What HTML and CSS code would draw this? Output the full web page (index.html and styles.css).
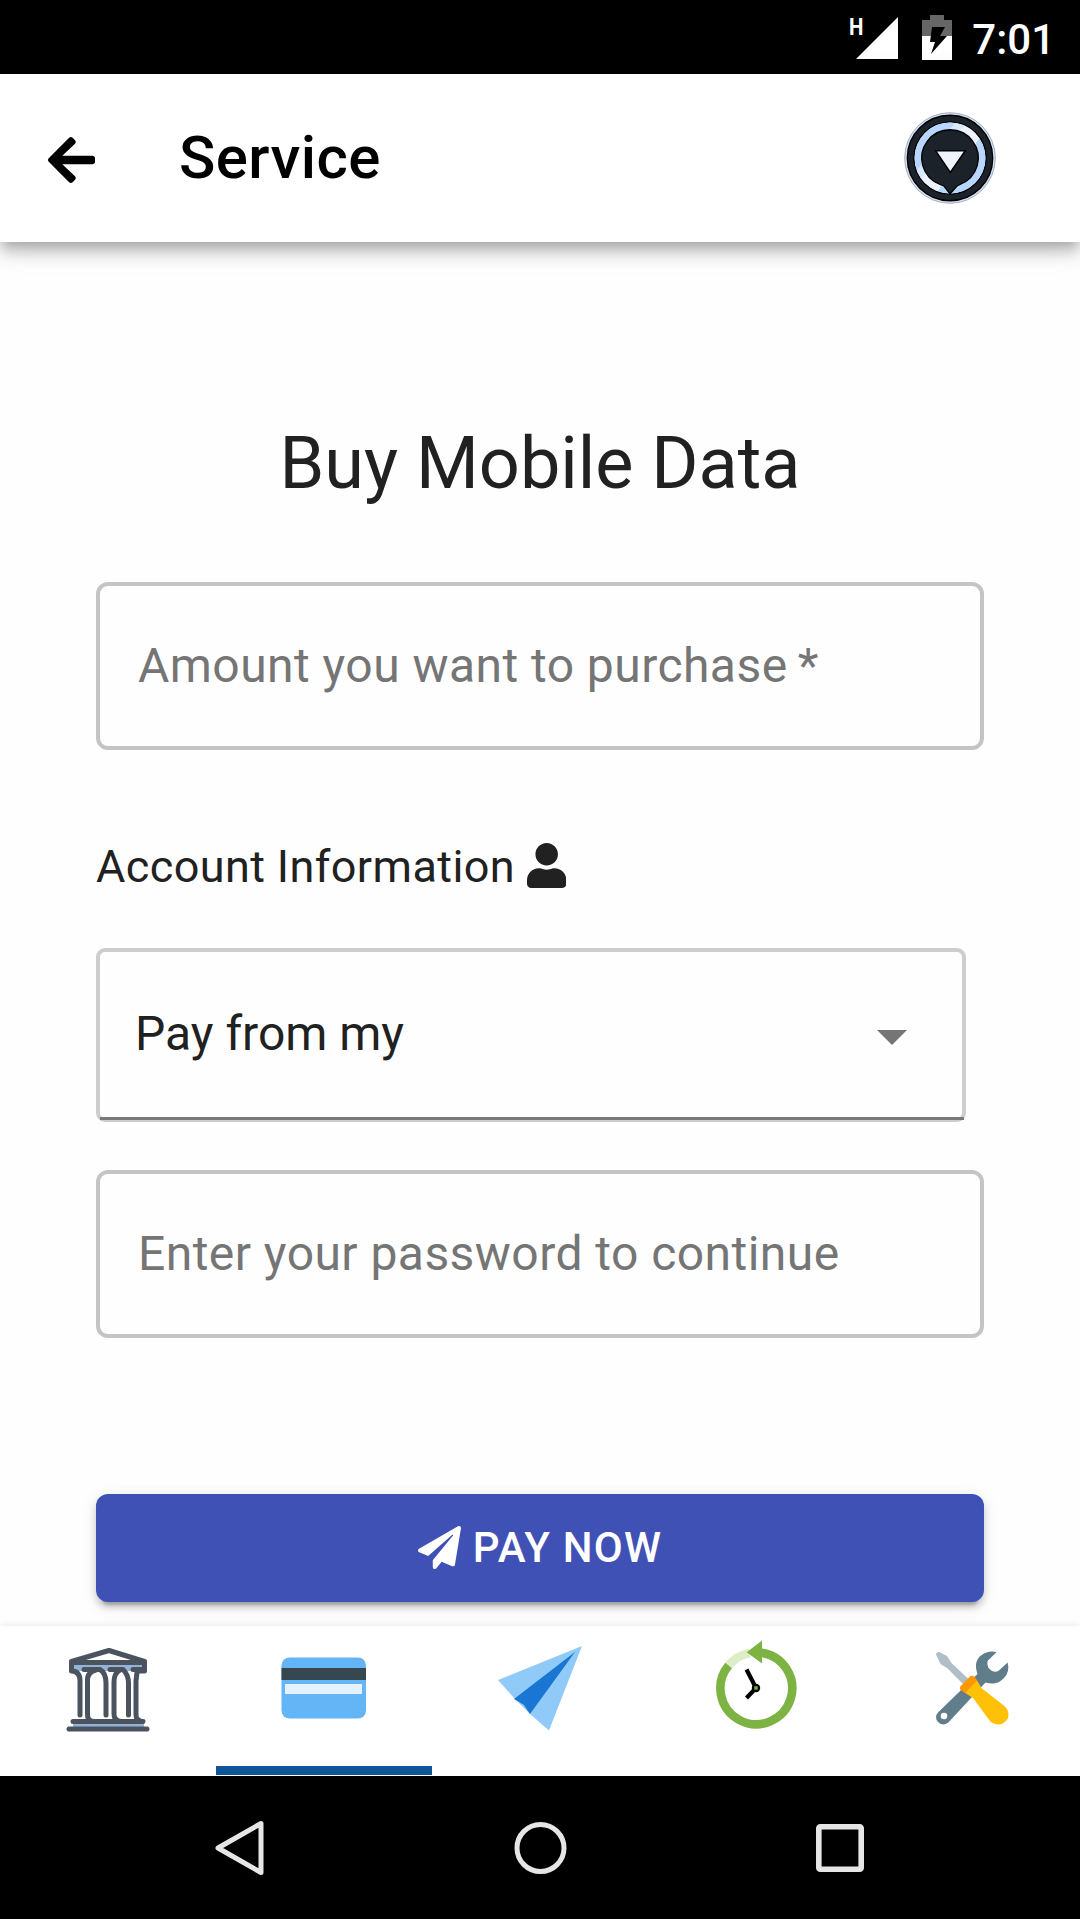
FILE: index.html
```html
<!DOCTYPE html>
<html lang="en">
<head>
<meta charset="utf-8">
<title>Service</title>
<link rel="stylesheet" href="styles.css">
</head>
<body>
<div class="screen">
  <div class="status-bar">
    <span class="network">H</span>
    <svg class="signal" width="42" height="42" viewBox="0 0 42 42"><path d="M42 0V42H0z" fill="#fff"/></svg>
    <svg class="battery" width="30" height="45" viewBox="0 0 30 45">
      <path d="M8 0H22V5H30V21H0V5H8z" fill="#666"/>
      <path d="M0 21H30V45H0z" fill="#fff"/>
      <path d="M10 12H23L18 21H25L9 39L13 27H8z" fill="#000"/>
    </svg>
    <span class="clock">7:01</span>
  </div>

  <header class="app-bar">
    <svg class="back" width="47" height="54" viewBox="0 0 448 512"><path d="M257.500 445.100l-22.200 22.200c-9.400 9.400-24.600 9.400-33.900 0L7 273c-9.400-9.400-9.400-24.600 0-33.900L201.400 44.700c9.400-9.400 24.600-9.400 33.900 0l22.200 22.200c9.500 9.500 9.300 25-.4 34.300L136.600 216H424c13.300 0 24 10.700 24 24v32c0 13.300-10.700 24-24 24H136.600l120.500 114.800c9.800 9.300 10 24.800.4 34.300z"/></svg>
    <h1 class="app-title">Service</h1>
    <svg class="avatar" width="92" height="92" viewBox="-46 -46 92 92">
      <defs>
        <linearGradient id="sheen" x1="0" y1="0.1" x2="1" y2="0.9">
          <stop offset="0" stop-color="#b9d6ff"/><stop offset=".3" stop-color="#b9d6ff"/>
          <stop offset=".3" stop-color="#d9e9fd"/><stop offset=".4" stop-color="#d9e9fd"/>
          <stop offset=".4" stop-color="#eff1fd"/><stop offset=".62" stop-color="#eff1fd"/>
          <stop offset=".62" stop-color="#b9d6ff"/><stop offset="1" stop-color="#b9d6ff"/>
        </linearGradient>
      </defs>
      <circle r="45.300" fill="#d3e4fb" stroke="#a9adb5" stroke-width="1"/>
      <circle r="39.400" fill="none" stroke="#000" stroke-width="8"/>
      <circle r="39.400" fill="none" stroke="#1c2229" stroke-width="5.400"/>
      <circle r="35.500" fill="url(#sheen)"/>
      <path d="M-10 26.500L-6 28L0 36L7 28L10 26.500A28.300 28.300 0 1 0-10 26.500z" fill="#1c2229" stroke="#000" stroke-width="1.300"/>
      <path d="M-14.300-7.200H15.300L.3 14.500z" fill="#f0f2fd" stroke="#000" stroke-width="1.500"/>
    </svg>
  </header>

  <main class="content">
    <h2 class="heading">Buy Mobile Data</h2>
    <div class="field field-amount">Amount you want to purchase&thinsp;*</div>
    <div class="account">
      <span class="account-label">Account Information</span>
      <svg width="39.400" height="45" viewBox="0 0 448 512"><path fill="#212121" d="M224 256c70.700 0 128-57.300 128-128S294.700 0 224 0 96 57.300 96 128s57.300 128 128 128zm89.600 32h-16.700c-22.200 10.200-46.900 16-72.900 16s-50.600-5.800-72.900-16h-16.700C60.200 288 0 348.200 0 422.400V464c0 26.500 21.500 48 48 48h352c26.500 0 48-21.500 48-48v-41.600c0-74.200-60.200-134.400-134.400-134.400z"/></svg>
    </div>
    <div class="select">
      <span class="select-value">Pay from my</span>
      <svg class="select-arrow" width="30" height="15" viewBox="0 0 30 15"><path d="M0 0H30L15 15z" fill="#757575"/></svg>
    </div>
    <div class="field field-password">Enter your password to continue</div>
    <div class="pay">
      <svg width="43" height="43" viewBox="0 0 512 512"><path fill="#fff" d="M476 3.200L12.500 270.600c-18.100 10.400-15.800 35.600 2.200 43.200L121 358.400l287.300-253.200c5.500-4.900 13.300 2.600 8.600 8.300L176 407v80.500c0 23.600 28.500 32.900 42.500 15.800L282 426l124.600 52.200c14.200 6 30.400-2.900 33-18.200l72-432C515 7.800 493.300-6.800 476 3.200z"/></svg>
      <span>PAY NOW</span>
    </div>
  </main>

  <nav class="tabs">
    <div class="tab">
      <svg width="90" height="90" viewBox="0 -1 90 90">
        <path d="M9 18H79V24H9zM10 76H81V82H10z" fill="#93b4da"/>
        <g fill="none" stroke="#4b535e" stroke-width="5" stroke-linecap="round" stroke-linejoin="round">
          <path d="M8.500 16V24Q17 24 17 34V68M8.500 14.500L46 3.500L81.500 14.500M8.500 15.500H81.500V24H74Q74 26 73 34V68Q73 74 80 74.500H10"/>
          <path d="M21 22.500H37Q43 26 43 36V68M33 23Q24 25 24.500 34V67Q24 74 31 74.500M47 22.500H60Q65.500 28 65.500 36V68M57 23Q51 26 51 35V67Q51 74 58 74.500M70 22.500H81.500M6 82H84"/>
        </g>
      </svg>
    </div>
    <div class="tab tab-active">
      <svg width="90" height="90" viewBox="0 0 90 90">
        <rect x="2.500" y="11.500" width="84.500" height="61" rx="8" fill="#64b5f6"/>
        <path d="M2.500 22H87V34H2.500z" fill="#37474f"/><path d="M6 38H83V48H6z" fill="#e3f2fd"/>
      </svg>
    </div>
    <div class="tab">
      <svg width="90" height="90" viewBox="0 0 90 90">
        <path d="M87 0L3 34L20 53L35 68L54 84.500z" fill="#90caf9"/>
        <path d="M80 6L19 53L29 59L35 68z" fill="#1976d2"/>
      </svg>
    </div>
    <div class="tab">
      <svg class="history" width="90" height="90" viewBox="0 0 90 90">
        <g fill="none" stroke-width="8.600">
          <path d="M39 7A35.900 35.900 0 0 0 17 20" stroke="#dcedc8"/>
          <path d="M17.600 19.500A35.900 35.900 0 1 0 49 6.600" stroke="#7cb342"/>
        </g>
        <path d="M35.700 6.300L51-5.500V17.500z" fill="#7cb342"/>
        <path d="M35.500 23.500L45 42L35.500 52" fill="none" stroke="#000" stroke-width="4.200"/>
        <circle cx="45" cy="42" r="4.200"/><path d="M43.300 40.300H46.700V43.700H43.300z" fill="#7cb342"/>
      </svg>
    </div>
    <div class="tab">
      <svg width="90" height="90" viewBox="0 0 90 90">
        <path d="M9 7.500L11.700 5.700L20 10L24.700 17.300L42 33.500L36.500 38.500L20.300 22.300L13.500 18L9 8.500z" fill="#b0bec5"/>
        <path d="M69.700 6L60.700 14.700Q59.500 20 62.500 23Q66 27 71.300 25L80.700 16.500Q83 26 77 32Q70 40 58.500 36.500L21.300 76.500Q15.500 80.500 11 76Q7 71 11 66.500L50.500 28Q46 15 54.700 9Q61 4 69.700 6z" fill="#607d8b"/>
        <circle cx="17" cy="70" r="3.300" fill="#fff"/>
        <path d="M49.700 34L54.700 42.300L78 60.500Q83.500 66 80.500 73Q74 82 64.500 76.500Q62 74 59.500 70.500L46.300 52.300L37.500 46.500z" fill="#ffc107"/>
        <path d="M33.300 40.500L43 30.500Q46 28.500 48.500 32L50 34.500L38 47L34.300 44.500Q32 42.500 33.300 40.500z" fill="#ff9800"/>
      </svg>
    </div>
  </nav>

  <div class="system-nav">
    <svg width="50" height="58" viewBox="0 0 50 58"><path d="M46 4.500V53.500L3 29z" fill="none" stroke="#e6e6e6" stroke-width="5" stroke-linejoin="round"/></svg>
    <svg width="54" height="54" viewBox="0.500 0 54 54"><circle cx="27" cy="27" r="23.500" fill="none" stroke="#e6e6e6" stroke-width="5"/></svg>
    <svg width="48" height="48" viewBox="0 0 48 48"><rect x="2.800" y="2.800" width="42.400" height="42.400" rx="1.500" fill="none" stroke="#e6e6e6" stroke-width="5.600"/></svg>
  </div>
</div>
</body>
</html>
```
FILE: styles.css
```css
* { box-sizing: border-box; }

body {
  margin: 0;
  background: #fefefe;
  font-family: Roboto, "Liberation Sans", sans-serif;
  color: #212121;
}

svg { display: block; flex: none; }

.screen {
  width: 1080px;
  height: 1919px;
  display: flex;
  flex-direction: column;
  overflow: hidden;
}

.status-bar {
  flex: none;
  height: 74px;
  background: #000;
  color: #fff;
  display: flex;
  justify-content: flex-end;
  align-items: flex-start;
  padding-right: 25px;
}
.network {
  width: 13px;
  margin: 13px -6px 0 0;
  font-size: 24px;
  line-height: 28px;
  font-weight: 700;
  transform: scaleX(.85);
  transform-origin: left;
}
.signal { margin: 17px 24px 0 0; }
.battery { margin: 15px 20px 0 0; }
.clock {
  margin-top: 15px;
  font-size: 42px;
  line-height: 50px;
  font-weight: 500;
}

.app-bar {
  flex: none;
  height: 168px;
  background: #fff;
  display: flex;
  align-items: center;
  padding: 0 84px 0 48px;
  position: relative;
  z-index: 1;
  box-shadow: 0 6px 12px -3px rgba(0,0,0,.2), 0 12px 15px 0 rgba(0,0,0,.14), 0 3px 30px 0 rgba(0,0,0,.12);
}
.back { margin-top: 4px; }
.app-title {
  margin: 0 auto 0 84px;
  font-size: 60px;
  line-height: 72px;
  font-weight: 500;
  letter-spacing: .45px;
  color: #000;
}

.content {
  flex: 1;
  min-height: 0;
  padding: 174px 96px 0;
}
.heading {
  margin: 0 0 70px;
  height: 96px;
  font-size: 72px;
  line-height: 96px;
  font-weight: 400;
  text-align: center;
}
.field {
  height: 168px;
  border: 4px solid #c4c4c4;
  border-radius: 12px;
  padding-left: 38px;
  font-size: 48px;
  line-height: 159px;
  letter-spacing: .45px;
  color: #757575;
}
.account {
  height: 198px;
  display: flex;
  align-items: center;
  gap: 12px;
  padding-top: 33px;
  font-size: 45px;
  letter-spacing: .4px;
}
.account-label { padding-top: 2px; }
.select {
  width: 870px;
  height: 174px;
  border: 4px solid #cdcdcd;
  border-radius: 9px;
  display: flex;
  align-items: center;
  justify-content: space-between;
  padding: 0 55px 0 35px;
  font-size: 48px;
  position: relative;
}
.select-value { padding-bottom: 4px; }
.select-arrow { margin-top: 4px; }
.select::after {
  content: "";
  position: absolute;
  left: 0;
  right: -2px;
  bottom: -2px;
  height: 3px;
  background: #797979;
}
.field-password { margin-top: 48px; }
.pay {
  margin-top: 156px;
  height: 108px;
  padding-bottom: 2px;
  border-radius: 12px;
  background: #3f51b5;
  color: #fff;
  display: flex;
  align-items: center;
  justify-content: center;
  gap: 12px;
  font-size: 42px;
  font-weight: 500;
  letter-spacing: 1.2px;
  box-shadow: 0 9px 3px -6px rgba(0,0,0,.2), 0 6px 6px 0 rgba(0,0,0,.14), 0 3px 15px 0 rgba(0,0,0,.12);
}

.tabs {
  flex: none;
  height: 150px;
  display: grid;
  grid-template-columns: repeat(5, 1fr);
  background: #fff;
  position: relative;
  box-shadow: 0 0 9px rgba(0,0,0,.1);
}
.tab {
  display: flex;
  justify-content: center;
  padding-top: 20px;
}
.tab-active {
  border-bottom: 9px solid #105598;
  margin-bottom: 1px;
}
.history { overflow: visible; }

.system-nav {
  flex: none;
  height: 143px;
  background: #000;
  display: flex;
  justify-content: space-between;
  align-items: center;
  padding: 1px 216px 0 215px;
}
```
